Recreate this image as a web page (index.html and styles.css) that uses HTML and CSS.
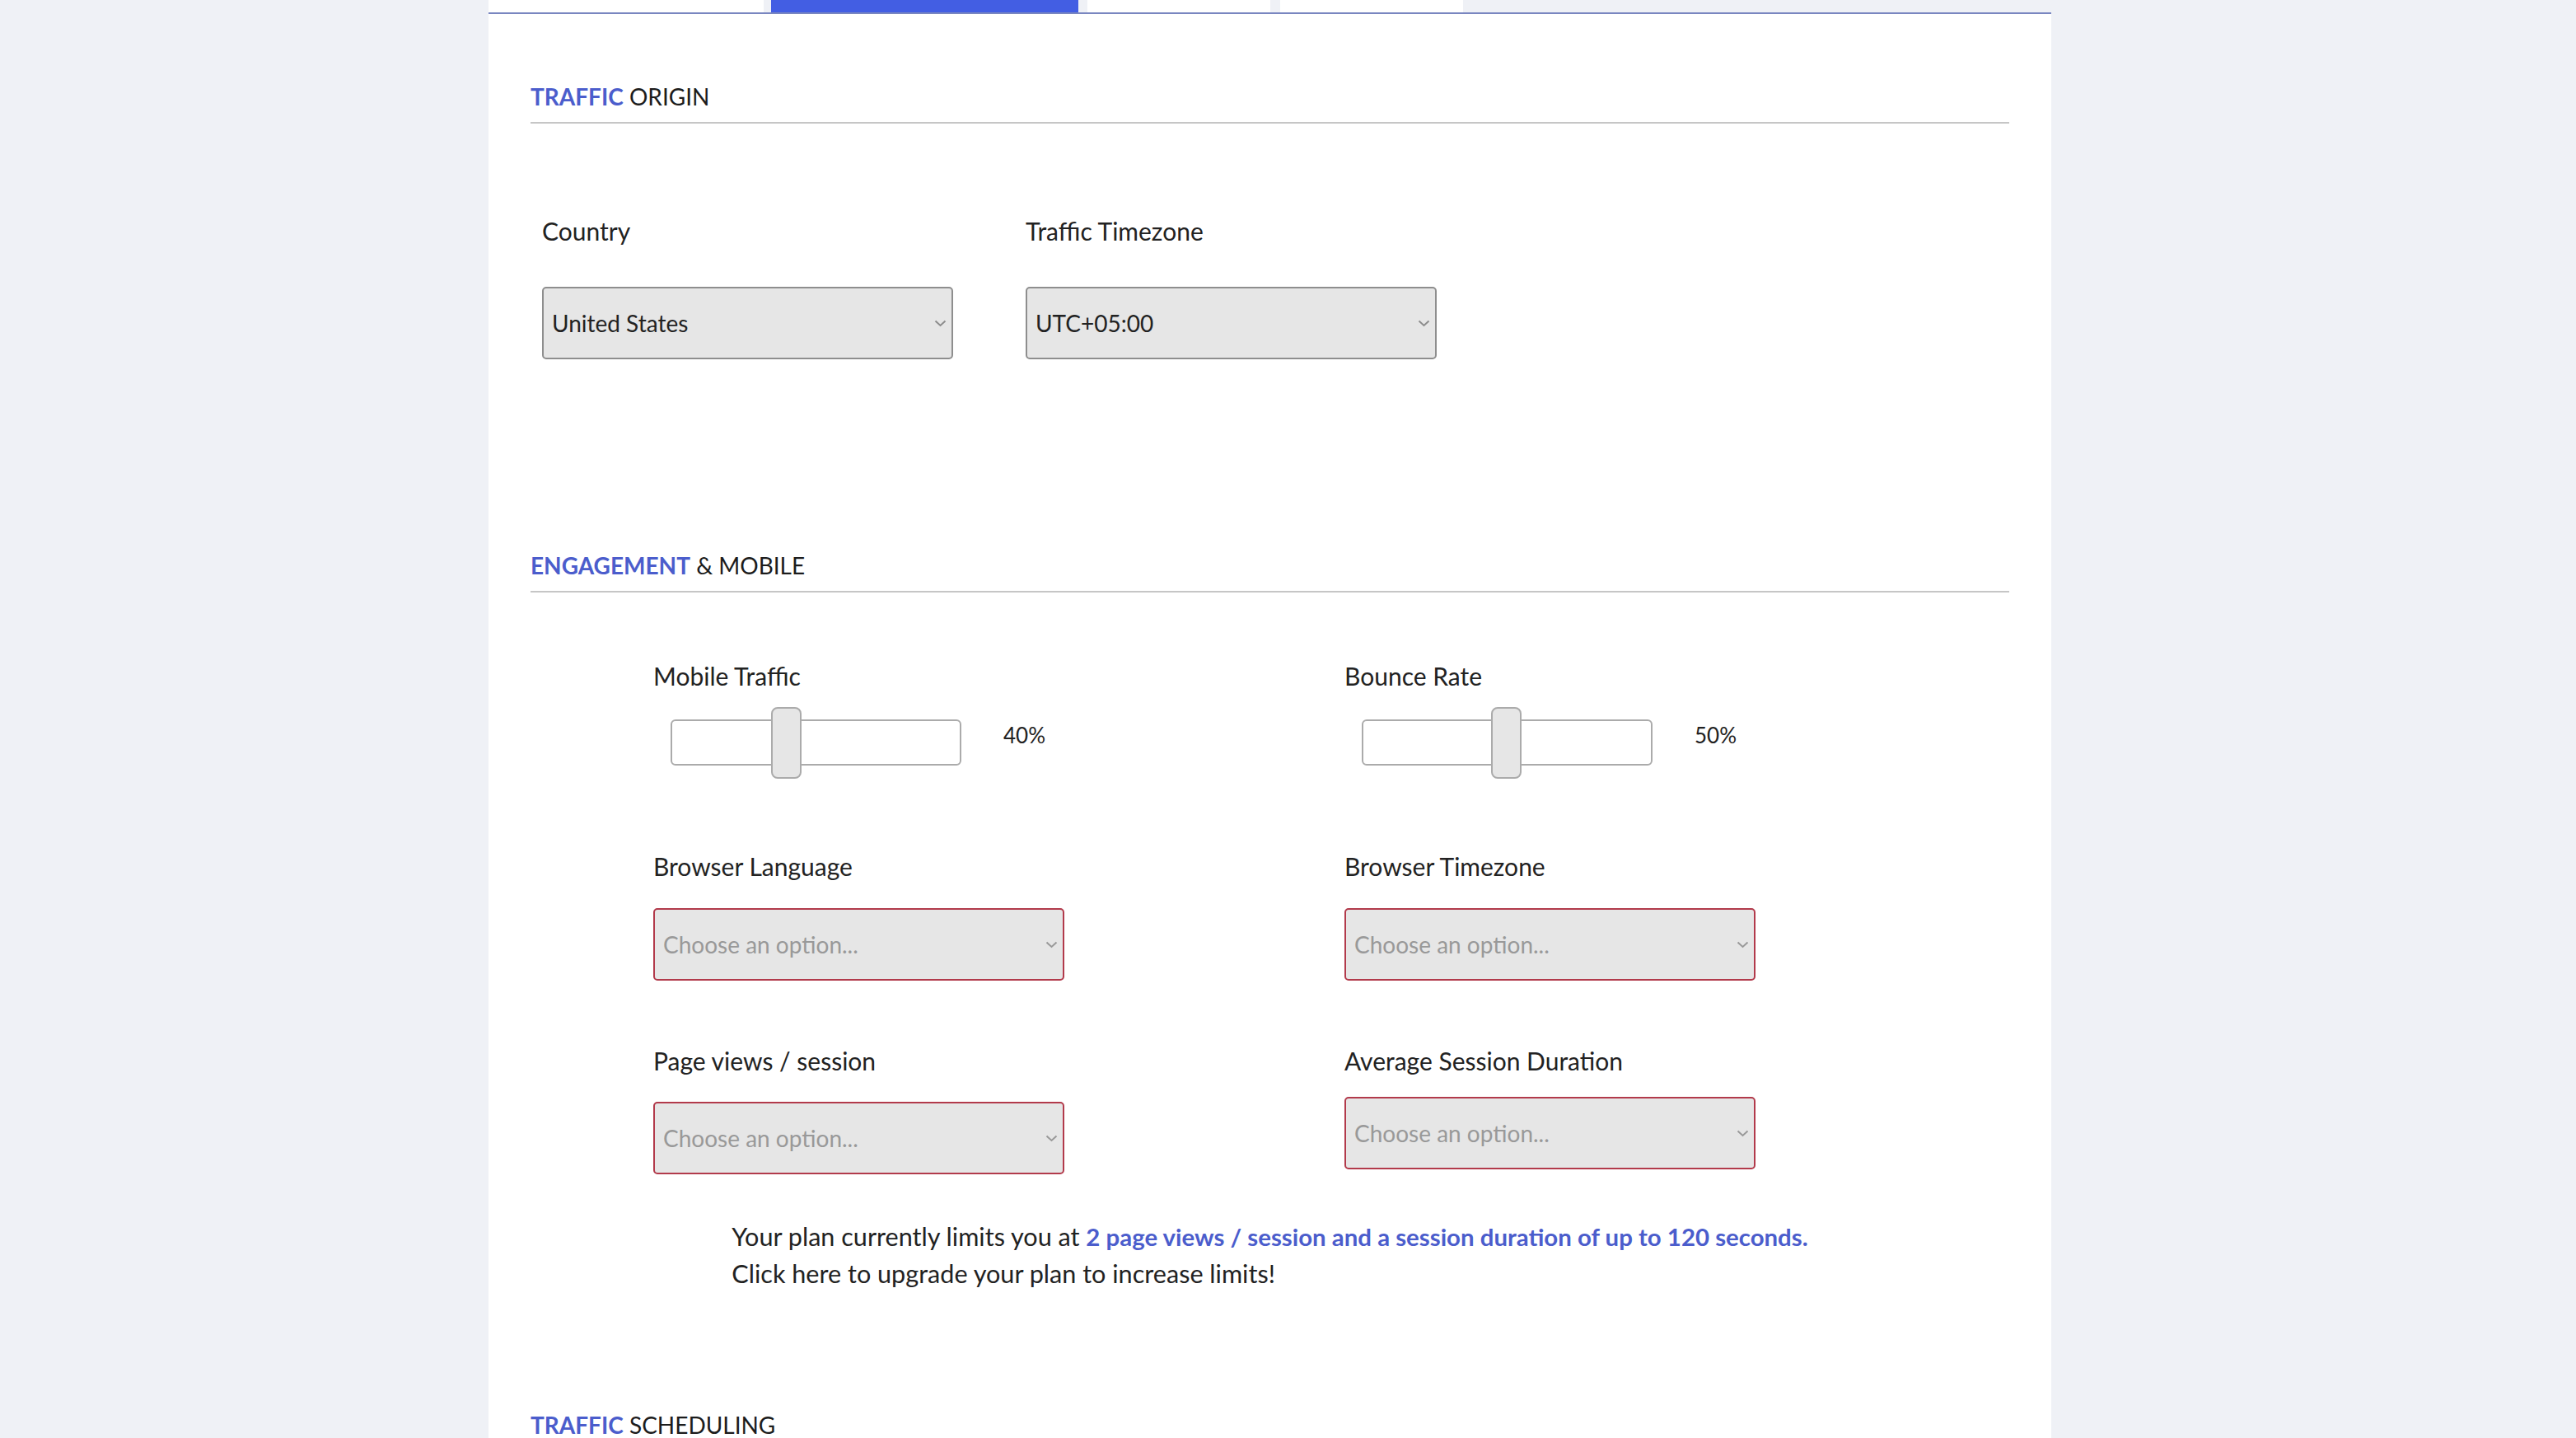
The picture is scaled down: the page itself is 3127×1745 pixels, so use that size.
FILE: index.html
```html
<!DOCTYPE html>
<html lang="en">
<head>
<meta charset="utf-8">
<title>Traffic settings</title>
<link rel="stylesheet" href="styles.css">
</head>
<body>
<div class="page">
  <div class="tabs">
    <div class="tab tab-a"></div>
    <div class="tab tab-b active"></div>
    <div class="tab tab-c"></div>
    <div class="tab tab-d"></div>
  </div>
  <div class="panel">
    <section class="section">
      <h2 class="section-title"><span class="accent">TRAFFIC</span> ORIGIN</h2>
      <div class="origin-grid">
        <div class="field">
          <div class="label">Country</div>
          <div class="select select-plain">
            <span class="select-value">United States</span>
            <svg class="chev" width="15" height="9" viewBox="0 0 15 9"><polyline points="1.5,1.5 7.5,7 13.5,1.5" fill="none" stroke="#8c8c8c" stroke-width="2"/></svg>
          </div>
        </div>
        <div class="field">
          <div class="label">Traffic Timezone</div>
          <div class="select select-plain">
            <span class="select-value">UTC+05:00</span>
            <svg class="chev" width="15" height="9" viewBox="0 0 15 9"><polyline points="1.5,1.5 7.5,7 13.5,1.5" fill="none" stroke="#8c8c8c" stroke-width="2"/></svg>
          </div>
        </div>
      </div>
    </section>

    <section class="section section-engage">
      <h2 class="section-title"><span class="accent">ENGAGEMENT</span> &amp; MOBILE</h2>
      <div class="engage-grid">
        <div class="field">
          <div class="label">Mobile Traffic</div>
          <div class="slider-row">
            <div class="track">
              <div class="thumb" style="left: 40%"></div>
            </div>
            <span class="slider-value">40%</span>
          </div>
        </div>
        <div class="field">
          <div class="label">Bounce Rate</div>
          <div class="slider-row">
            <div class="track">
              <div class="thumb" style="left: 50%"></div>
            </div>
            <span class="slider-value">50%</span>
          </div>
        </div>

        <div class="field field-row2">
          <div class="label">Browser Language</div>
          <div class="select select-invalid">
            <span class="select-placeholder">Choose an option...</span>
            <svg class="chev" width="15" height="9" viewBox="0 0 15 9"><polyline points="1.5,1.5 7.5,7 13.5,1.5" fill="none" stroke="#999" stroke-width="2"/></svg>
          </div>
        </div>
        <div class="field field-row2">
          <div class="label">Browser Timezone</div>
          <div class="select select-invalid">
            <span class="select-placeholder">Choose an option...</span>
            <svg class="chev" width="15" height="9" viewBox="0 0 15 9"><polyline points="1.5,1.5 7.5,7 13.5,1.5" fill="none" stroke="#999" stroke-width="2"/></svg>
          </div>
        </div>

        <div class="field field-row3">
          <div class="label">Page views / session</div>
          <div class="select select-invalid">
            <span class="select-placeholder">Choose an option...</span>
            <svg class="chev" width="15" height="9" viewBox="0 0 15 9"><polyline points="1.5,1.5 7.5,7 13.5,1.5" fill="none" stroke="#999" stroke-width="2"/></svg>
          </div>
        </div>
        <div class="field field-row3 field-tight">
          <div class="label">Average Session Duration</div>
          <div class="select select-invalid">
            <span class="select-placeholder">Choose an option...</span>
            <svg class="chev" width="15" height="9" viewBox="0 0 15 9"><polyline points="1.5,1.5 7.5,7 13.5,1.5" fill="none" stroke="#999" stroke-width="2"/></svg>
          </div>
        </div>
      </div>
      <div class="plan-note">
        <p class="plan-text">Your plan currently limits you at <strong class="plan-limit">2 page views / session and a session duration of up to 120 seconds.</strong><br>Click here to upgrade your plan to increase limits!</p>
      </div>
    </section>

    <section class="section section-schedule">
      <h2 class="section-title"><span class="accent">TRAFFIC</span> SCHEDULING</h2>
    </section>
  </div>
</div>
</body>
</html>
```

FILE: styles.css
```css
* { box-sizing: border-box; }

html, body {
  margin: 0;
  padding: 0;
}

body {
  background: #eff1f6;
  font-family: Lato, "Liberation Sans", sans-serif;
  color: #222;
  height: 1745px;
  overflow: hidden;
}

.page {
  margin-left: 593px;
  width: 1897px;
}

.tabs {
  display: flex;
  height: 17px;
  border-bottom: 2px solid #7986c0;
  background: #eff1f6;
}

.tab {
  height: 15px;
  background: #ffffff;
}

.tab-a { width: 334px; margin-right: 9px; }
.tab-b { width: 373px; margin-right: 11px; }
.tab-c { width: 222px; margin-right: 12px; }
.tab-d { width: 222px; }

.tab.active { background: #435ee3; }

.panel {
  background: #ffffff;
  padding: 83px 51px 0 51px;
  min-height: 1728px;
}

.section-title {
  margin: 0;
  font-size: 28px;
  line-height: 34px;
  font-weight: 400;
  color: #1c1c1c;
  padding-bottom: 14px;
  border-bottom: 2px solid #c6c6c6;
}

.accent {
  color: #4b5dcc;
  font-weight: 700;
}

.label {
  font-size: 30px;
  line-height: 34px;
  color: #222;
}

/* selects */
.select {
  width: 499px;
  height: 88px;
  background: #e6e6e6;
  border-radius: 5px;
  display: flex;
  align-items: center;
  justify-content: space-between;
  padding: 0 6px 0 10px;
}

.select-plain { border: 2px solid #8e8e8e; }
.select-invalid { border: 2px solid #b23a4b; }

.select-value {
  font-size: 28px;
  line-height: 34px;
  color: #222;
}

.select-placeholder {
  font-size: 28px;
  line-height: 34px;
  color: #999;
}

.chev { display: block; flex: none; }

/* section 1 */
.origin-grid {
  display: grid;
  grid-template-columns: 587px 1fr;
  padding-left: 14px;
  margin-top: 113px;
}

.origin-grid .select { margin-top: 51px; }

/* section 2 */
.section-engage { margin-top: 233px; }

.engage-grid {
  display: grid;
  grid-template-columns: 839px 1fr;
  padding-left: 149px;
  margin-top: 84px;
}

.slider-row {
  display: flex;
  align-items: flex-start;
  margin-top: 36px;
  padding-left: 21px;
}

.track {
  position: relative;
  width: 353px;
  height: 56px;
  background: #ffffff;
  border: 2px solid #ababab;
  border-radius: 6px;
}

.thumb {
  position: absolute;
  top: -17px;
  width: 37px;
  height: 87px;
  margin-left: -20px;
  background: #e6e6e6;
  border: 2px solid #ababab;
  border-radius: 8px;
}

.slider-value {
  margin-left: 51px;
  margin-top: 4px;
  font-size: 26px;
  line-height: 31px;
  color: #222;
}

.field-row2 { margin-top: 105px; }
.field-row2 .select { margin-top: 34px; }

.field-row3 { margin-top: 80px; }
.field-row3 .select { margin-top: 33px; }
.field-row3.field-tight .select { margin-top: 27px; }

.plan-note {
  display: flex;
  justify-content: center;
  margin-top: 53px;
}

.plan-text {
  margin: 0;
  font-size: 30.6px;
  line-height: 45px;
  color: #222;
}

.plan-limit {
  color: #4b5dcc;
  font-weight: 700;
  font-size: 29.4px;
}

/* section 3 */
.section-schedule { margin-top: 144px; }
```
